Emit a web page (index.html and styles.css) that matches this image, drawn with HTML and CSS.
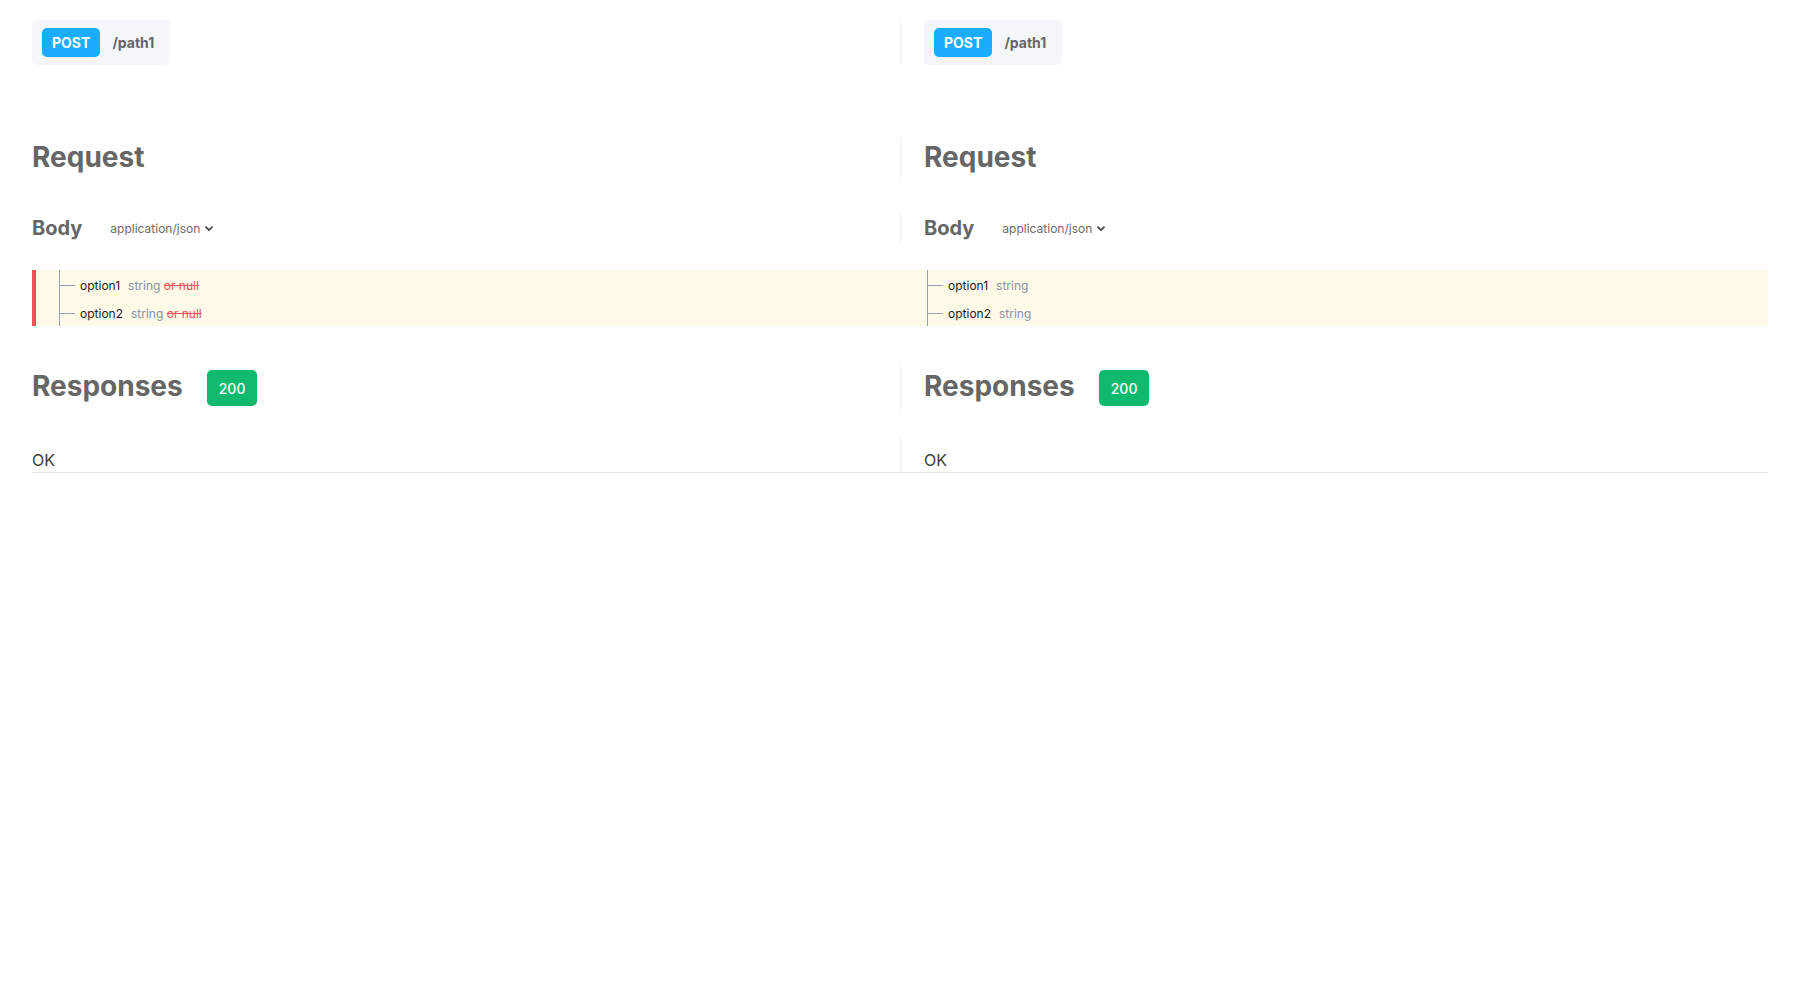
FILE: index.html
```html
<!DOCTYPE html>
<html lang="en">
<head>
<meta charset="utf-8">
<title>Diff</title>
<link rel="stylesheet" href="styles.css">
</head>
<body>
<div class="page">
  <div class="row row-header">
    <div class="cell">
      <div class="op"><span class="method">POST</span><span class="path">/path1</span></div>
    </div>
    <div class="cell cell-r">
      <div class="op"><span class="method">POST</span><span class="path">/path1</span></div>
    </div>
  </div>

  <div class="row row-request">
    <div class="cell"><h2 class="h-lg">Request</h2></div>
    <div class="cell cell-r"><h2 class="h-lg">Request</h2></div>
  </div>

  <div class="row row-body">
    <div class="cell body-cell">
      <h3 class="h-md">Body</h3>
      <div class="select">application/json<svg class="chev" width="8" height="6" viewBox="0 0 8 6"><path d="M1 1.2 L4 4.2 L7 1.2" fill="none" stroke="#4a4a4a" stroke-width="1.8" stroke-linecap="round" stroke-linejoin="round"/></svg></div>
    </div>
    <div class="cell cell-r body-cell">
      <h3 class="h-md">Body</h3>
      <div class="select">application/json<svg class="chev" width="8" height="6" viewBox="0 0 8 6"><path d="M1 1.2 L4 4.2 L7 1.2" fill="none" stroke="#4a4a4a" stroke-width="1.8" stroke-linecap="round" stroke-linejoin="round"/></svg></div>
    </div>
  </div>

  <div class="row row-diff">
    <div class="cell diff-l">
      <div class="tree">
        <div class="node"><span class="name">option1</span><span class="type">string <del class="removed">or null</del></span></div>
        <div class="node"><span class="name">option2</span><span class="type">string <del class="removed">or null</del></span></div>
      </div>
    </div>
    <div class="cell diff-r">
      <div class="tree">
        <div class="node"><span class="name">option1</span><span class="type">string</span></div>
        <div class="node"><span class="name">option2</span><span class="type">string</span></div>
      </div>
    </div>
  </div>

  <div class="row row-responses">
    <div class="cell resp-cell"><h2 class="h-lg">Responses</h2><span class="status">200</span></div>
    <div class="cell cell-r resp-cell"><h2 class="h-lg">Responses</h2><span class="status">200</span></div>
  </div>

  <div class="row row-ok">
    <div class="cell ok-cell">OK</div>
    <div class="cell cell-r ok-cell">OK</div>
  </div>
</div>
</body>
</html>
```

FILE: styles.css
```css
* { box-sizing: border-box; }

html, body {
  margin: 0;
  padding: 0;
  background: #ffffff;
}

body {
  font-family: Inter, "Noto Sans", "Liberation Sans", sans-serif;
  color: #3c3c3c;
}

.page {
  padding: 20px 32px;
}

.row {
  display: grid;
  grid-template-columns: 868px 868px;
}

.cell {
  min-width: 0;
}

.cell-r {
  border-left: 1px solid #eef0f4;
  padding-left: 23px;
}

/* header */
.op {
  display: inline-flex;
  align-items: center;
  background: #f5f6fa;
  border-radius: 5px;
  padding: 8px 16px 8px 10px;
}

.method {
  display: inline-flex;
  align-items: center;
  height: 29px;
  padding: 0 10px;
  border-radius: 5px;
  background: #1aadff;
  color: #ffffff;
  font-weight: 700;
  font-size: 14px;
}

.path {
  margin-left: 12px;
  color: #666666;
  font-weight: 700;
  font-size: 14px;
}

/* headings */
.h-lg {
  margin: 0;
  font-size: 28px;
  font-weight: 700;
  color: #666666;
  line-height: 41px;
}

.h-md {
  margin: 0;
  font-size: 20px;
  font-weight: 700;
  color: #666666;
}

.row-request {
  margin-top: 72px;
  height: 41px;
}

.row-body {
  margin-top: 32px;
  height: 36px;
}

.body-cell {
  display: flex;
  align-items: center;
}

.select {
  display: inline-flex;
  align-items: center;
  margin-left: 28px;
  font-size: 12px;
  color: #6b6b6b;
}

.chev {
  margin-left: 5px;
  margin-top: 1px;
}

/* diff rows */
.row-diff {
  margin-top: 24px;
  height: 56px;
}

.diff-l {
  background: #fefae7;
  border-left: 4px solid #f04e58;
  padding-left: 23px;
}

.diff-r {
  background: #fefae7;
  padding-left: 27px;
}

.tree {
  height: 100%;
  border-left: 1px solid #92a0b4;
  padding-top: 3px;
  display: flex;
  flex-direction: column;
  gap: 4px;
}

.node {
  height: 24px;
  display: flex;
  align-items: center;
  font-size: 12px;
}

.node::before {
  content: "";
  width: 15px;
  height: 1px;
  background: #92a0b4;
  margin-right: 5px;
}

.name {
  color: #1c1c1c;
  margin-right: 8px;
}

.type {
  color: #8591a5;
}

.removed {
  color: #f0545c;
  text-decoration: line-through;
}

/* responses */
.row-responses {
  margin-top: 39px;
  height: 45px;
}

.resp-cell {
  display: flex;
  align-items: flex-start;
}

.resp-cell .h-lg {
  line-height: 34px;
  margin-top: 4px;
}

.status {
  margin-left: 24px;
  margin-top: 5px;
  height: 36px;
  padding: 0 12px;
  display: inline-flex;
  align-items: center;
  border-radius: 5px;
  background: #0fb96d;
  color: #ffffff;
  font-size: 14px;
  font-weight: 500;
}

/* ok */
.row-ok {
  margin-top: 25px;
}

.ok-cell {
  padding-top: 16px;
  padding-bottom: 3px;
  line-height: 18px;
  font-size: 16px;
  color: #3c3c3c;
  border-bottom: 1px solid #e3e3e3;
}
```
